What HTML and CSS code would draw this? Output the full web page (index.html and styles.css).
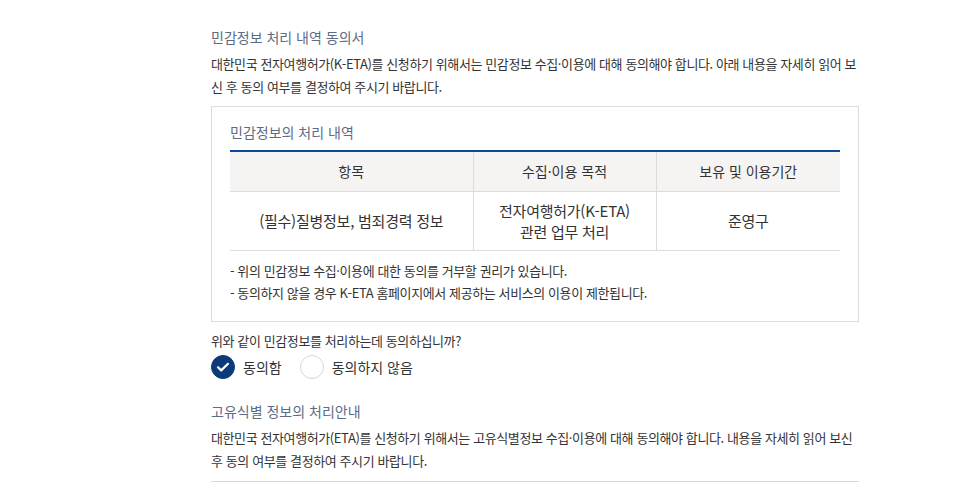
FILE: index.html
```html
<!DOCTYPE html>
<html lang="ko">
<head>
<meta charset="utf-8">
<link rel="stylesheet" href="styles.css">
</head>
<body>
<div class="container">
  <h2 class="sec-title">민감정보 처리 내역 동의서</h2>
  <p class="desc">대한민국 전자여행허가(K-ETA)를 신청하기 위해서는 민감정보 수집·이용에 대해 동의해야 합니다. 아래 내용을 자세히 읽어 보신 후 동의 여부를 결정하여 주시기 바랍니다.</p>
  <div class="box">
    <h3 class="box-title">민감정보의 처리 내역</h3>
    <table class="info-table">
      <thead>
        <tr><th class="c1">항목</th><th class="c2">수집·이용 목적</th><th class="c3">보유 및 이용기간</th></tr>
      </thead>
      <tbody>
        <tr><td>(필수)질병정보, 범죄경력 정보</td><td>전자여행허가(K-ETA)<br>관련 업무 처리</td><td>준영구</td></tr>
      </tbody>
    </table>
    <ul class="notes">
      <li>- 위의 민감정보 수집·이용에 대한 동의를 거부할 권리가 있습니다.</li>
      <li>- 동의하지 않을 경우 K-ETA 홈페이지에서 제공하는 서비스의 이용이 제한됩니다.</li>
    </ul>
  </div>
  <p class="question">위와 같이 민감정보를 처리하는데 동의하십니까?</p>
  <div class="radios">
    <label class="radio">
      <span class="circle checked"><svg width="24" height="24" viewBox="0 0 24 24"><path d="M7 12.3l3.2 3.1L17 8.8" fill="none" stroke="#fff" stroke-width="2.2" stroke-linecap="round" stroke-linejoin="round"/></svg></span>
      <span class="radio-text">동의함</span>
    </label>
    <label class="radio">
      <span class="circle"></span>
      <span class="radio-text">동의하지 않음</span>
    </label>
  </div>
  <h2 class="sec-title second">고유식별 정보의 처리안내</h2>
  <p class="desc">대한민국 전자여행허가(ETA)를 신청하기 위해서는 고유식별정보 수집·이용에 대해 동의해야 합니다. 내용을 자세히 읽어 보신 후 동의 여부를 결정하여 주시기 바랍니다.</p>
  <div class="divider"></div>
</div>
</body>
</html>
```
FILE: styles.css
```css
* { box-sizing: border-box; }
body {
  margin: 0;
  background: #fff;
  font-family: "Noto Sans CJK KR", "Noto Sans", sans-serif;
  color: #333;
}
.container {
  width: 648px;
  margin-left: 211px;
  padding-top: 27px;
}
.sec-title {
  margin: 0;
  font-size: 14px;
  line-height: 20px;
  font-weight: 400;
  color: #5d6b84;
}
.sec-title.second { margin-top: 22px; }
.desc {
  margin: 5px 0 0;
  font-size: 13px;
  line-height: 23px;
  color: #333;
  letter-spacing: -0.4px;
}
.box {
  margin-top: 8px;
  border: 1px solid #dcdcdc;
  padding: 15px 18px 17px;
}
.box-title {
  margin: 0;
  font-size: 14px;
  line-height: 20px;
  font-weight: 400;
  color: #5d6b84;
}
.info-table {
  margin-top: 8px;
  width: 100%;
  border-collapse: collapse;
  border-top: 2px solid #0b4a9b;
  color: #333;
}
.info-table th {
  background: #f5f4f2;
  font-weight: 400;
  font-size: 14px;
  height: 40px;
  border-bottom: 1px solid #dcdcdc;
}
.info-table th + th, .info-table td + td { border-left: 1px solid #dcdcdc; }
.info-table .c1 { width: 243px; }
.info-table .c2 { width: 183px; }
.info-table td {
  text-align: center;
  height: 59px;
  font-size: 15px;
  letter-spacing: -0.25px;
  line-height: 21px;
  border-bottom: 1px solid #dcdcdc;
}
.notes {
  list-style: none;
  margin: 9px 0 0;
  padding: 0;
  font-size: 13px;
  letter-spacing: -0.4px;
  line-height: 22px;
  color: #333;
}
.question {
  margin: 9px 0 0;
  font-size: 13px;
  letter-spacing: -0.4px;
  line-height: 20px;
  color: #333;
}
.radios {
  display: flex;
  gap: 18px;
  margin-top: 4px;
}
.radio {
  display: flex;
  align-items: center;
  gap: 8px;
  font-size: 14px;
  color: #333;
}
.circle {
  width: 24px;
  height: 24px;
  border-radius: 50%;
  border: 1px solid #d6d6d6;
  background: #fff;
  display: flex;
}
.circle.checked {
  background: #0d3b7a;
  border-color: #0d3b7a;
}
.circle svg { margin: -1px; }
.divider {
  margin-top: 9px;
  border-top: 1px solid #d9d9d9;
}
```
